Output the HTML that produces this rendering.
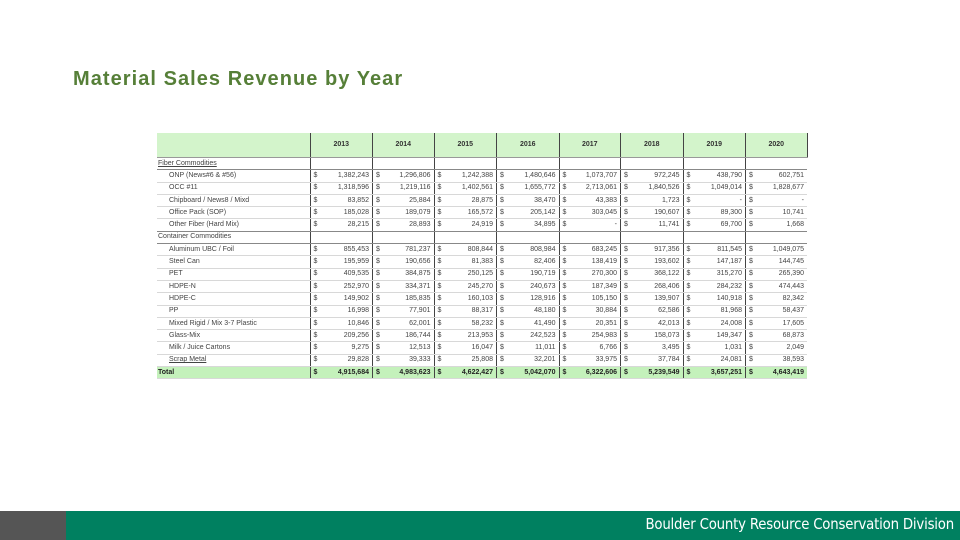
<!DOCTYPE html>
<html><head><meta charset="utf-8"><style>
html,body{margin:0;padding:0;background:#fff;width:960px;height:540px;overflow:hidden;position:relative;font-family:"Liberation Sans",Arial,sans-serif}
.title{position:absolute;left:73px;top:68px;font-size:20px;font-weight:bold;color:#567f38;letter-spacing:1.05px;white-space:nowrap}
.foot{position:absolute;left:0;top:511px;width:960px;height:29px;background:#008060}
.foot .g{position:absolute;left:0;top:0;width:66px;height:29px;background:#555}
.foot .t{position:absolute;right:6px;top:5px;font-size:14.8px;color:#fff;font-family:"DejaVu Sans Condensed","Liberation Sans Narrow",sans-serif;letter-spacing:-0.2px;white-space:nowrap}
table{position:absolute;left:157px;top:133px;border-collapse:collapse;table-layout:fixed;font-size:7px;color:#444}
td{padding:0;height:11.3px;line-height:10px;border-bottom:1px solid #d8d8d8;white-space:nowrap;overflow:hidden}
tr.h td{height:24px;background:#d3f4cb;font-weight:bold;text-align:center;color:#333;border-bottom:1px solid #999}
td.l{padding-left:12px}
td.c{padding-left:1px}
td.d{border-left:1px solid #444;padding-left:3px;width:11px}
td.v{text-align:right;padding-right:3px}
tr.tot td{background:#c4f1bb;font-weight:bold;color:#222}
tr.sec td{border-bottom:1px solid #888}
td.yr{border-left:1px solid #444}
</style></head><body>
<div class="title">Material Sales Revenue by Year</div>
<table>
<colgroup><col style="width:153px"><col style="width:14px"><col style="width:48px"><col style="width:14px"><col style="width:47px"><col style="width:14px"><col style="width:48px"><col style="width:14px"><col style="width:48px"><col style="width:14px"><col style="width:47px"><col style="width:14px"><col style="width:48px"><col style="width:14px"><col style="width:48px"><col style="width:14px"><col style="width:47px"></colgroup>
<tr class="h"><td></td><td class="yr" colspan="2">2013</td><td class="yr" colspan="2">2014</td><td class="yr" colspan="2">2015</td><td class="yr" colspan="2">2016</td><td class="yr" colspan="2">2017</td><td class="yr" colspan="2">2018</td><td class="yr" colspan="2">2019</td><td class="yr" colspan="2" style="border-right:1px solid #444">2020</td></tr>
<tr class="sec"><td class="c"><u>Fiber Commodities</u></td><td class="d"></td><td></td><td class="d"></td><td></td><td class="d"></td><td></td><td class="d"></td><td></td><td class="d"></td><td></td><td class="d"></td><td></td><td class="d"></td><td></td><td class="d"></td><td></td></tr>
<tr><td class="l">ONP (News#6 &amp; #56)</td><td class="d">$</td><td class="v">1,382,243</td><td class="d">$</td><td class="v">1,296,806</td><td class="d">$</td><td class="v">1,242,388</td><td class="d">$</td><td class="v">1,480,646</td><td class="d">$</td><td class="v">1,073,707</td><td class="d">$</td><td class="v">972,245</td><td class="d">$</td><td class="v">438,790</td><td class="d">$</td><td class="v">602,751</td></tr>
<tr><td class="l">OCC #11</td><td class="d">$</td><td class="v">1,318,596</td><td class="d">$</td><td class="v">1,219,116</td><td class="d">$</td><td class="v">1,402,561</td><td class="d">$</td><td class="v">1,655,772</td><td class="d">$</td><td class="v">2,713,061</td><td class="d">$</td><td class="v">1,840,526</td><td class="d">$</td><td class="v">1,049,014</td><td class="d">$</td><td class="v">1,828,677</td></tr>
<tr><td class="l">Chipboard / News8 / Mixd</td><td class="d">$</td><td class="v">83,852</td><td class="d">$</td><td class="v">25,884</td><td class="d">$</td><td class="v">28,875</td><td class="d">$</td><td class="v">38,470</td><td class="d">$</td><td class="v">43,383</td><td class="d">$</td><td class="v">1,723</td><td class="d">$</td><td class="v">-</td><td class="d">$</td><td class="v">-</td></tr>
<tr><td class="l">Office Pack (SOP)</td><td class="d">$</td><td class="v">185,028</td><td class="d">$</td><td class="v">189,079</td><td class="d">$</td><td class="v">165,572</td><td class="d">$</td><td class="v">205,142</td><td class="d">$</td><td class="v">303,045</td><td class="d">$</td><td class="v">190,607</td><td class="d">$</td><td class="v">89,300</td><td class="d">$</td><td class="v">10,741</td></tr>
<tr class="sec"><td class="l">Other Fiber (Hard Mix)</td><td class="d">$</td><td class="v">28,215</td><td class="d">$</td><td class="v">28,893</td><td class="d">$</td><td class="v">24,919</td><td class="d">$</td><td class="v">34,895</td><td class="d">$</td><td class="v">-</td><td class="d">$</td><td class="v">11,741</td><td class="d">$</td><td class="v">69,700</td><td class="d">$</td><td class="v">1,668</td></tr>
<tr class="sec"><td class="c">Container Commodities</td><td class="d"></td><td></td><td class="d"></td><td></td><td class="d"></td><td></td><td class="d"></td><td></td><td class="d"></td><td></td><td class="d"></td><td></td><td class="d"></td><td></td><td class="d"></td><td></td></tr>
<tr><td class="l">Aluminum UBC / Foil</td><td class="d">$</td><td class="v">855,453</td><td class="d">$</td><td class="v">781,237</td><td class="d">$</td><td class="v">808,844</td><td class="d">$</td><td class="v">808,984</td><td class="d">$</td><td class="v">683,245</td><td class="d">$</td><td class="v">917,356</td><td class="d">$</td><td class="v">811,545</td><td class="d">$</td><td class="v">1,049,075</td></tr>
<tr><td class="l">Steel Can</td><td class="d">$</td><td class="v">195,959</td><td class="d">$</td><td class="v">190,656</td><td class="d">$</td><td class="v">81,383</td><td class="d">$</td><td class="v">82,406</td><td class="d">$</td><td class="v">138,419</td><td class="d">$</td><td class="v">193,602</td><td class="d">$</td><td class="v">147,187</td><td class="d">$</td><td class="v">144,745</td></tr>
<tr><td class="l">PET</td><td class="d">$</td><td class="v">409,535</td><td class="d">$</td><td class="v">384,875</td><td class="d">$</td><td class="v">250,125</td><td class="d">$</td><td class="v">190,719</td><td class="d">$</td><td class="v">270,300</td><td class="d">$</td><td class="v">368,122</td><td class="d">$</td><td class="v">315,270</td><td class="d">$</td><td class="v">265,390</td></tr>
<tr><td class="l">HDPE-N</td><td class="d">$</td><td class="v">252,970</td><td class="d">$</td><td class="v">334,371</td><td class="d">$</td><td class="v">245,270</td><td class="d">$</td><td class="v">240,673</td><td class="d">$</td><td class="v">187,349</td><td class="d">$</td><td class="v">268,406</td><td class="d">$</td><td class="v">284,232</td><td class="d">$</td><td class="v">474,443</td></tr>
<tr><td class="l">HDPE-C</td><td class="d">$</td><td class="v">149,902</td><td class="d">$</td><td class="v">185,835</td><td class="d">$</td><td class="v">160,103</td><td class="d">$</td><td class="v">128,916</td><td class="d">$</td><td class="v">105,150</td><td class="d">$</td><td class="v">139,907</td><td class="d">$</td><td class="v">140,918</td><td class="d">$</td><td class="v">82,342</td></tr>
<tr><td class="l">PP</td><td class="d">$</td><td class="v">16,998</td><td class="d">$</td><td class="v">77,901</td><td class="d">$</td><td class="v">88,317</td><td class="d">$</td><td class="v">48,180</td><td class="d">$</td><td class="v">30,884</td><td class="d">$</td><td class="v">62,586</td><td class="d">$</td><td class="v">81,968</td><td class="d">$</td><td class="v">58,437</td></tr>
<tr><td class="l">Mixed Rigid / Mix 3-7 Plastic</td><td class="d">$</td><td class="v">10,846</td><td class="d">$</td><td class="v">62,001</td><td class="d">$</td><td class="v">58,232</td><td class="d">$</td><td class="v">41,490</td><td class="d">$</td><td class="v">20,351</td><td class="d">$</td><td class="v">42,013</td><td class="d">$</td><td class="v">24,008</td><td class="d">$</td><td class="v">17,605</td></tr>
<tr><td class="l">Glass-Mix</td><td class="d">$</td><td class="v">209,256</td><td class="d">$</td><td class="v">186,744</td><td class="d">$</td><td class="v">213,953</td><td class="d">$</td><td class="v">242,523</td><td class="d">$</td><td class="v">254,983</td><td class="d">$</td><td class="v">158,073</td><td class="d">$</td><td class="v">149,347</td><td class="d">$</td><td class="v">68,873</td></tr>
<tr><td class="l">Milk / Juice Cartons</td><td class="d">$</td><td class="v">9,275</td><td class="d">$</td><td class="v">12,513</td><td class="d">$</td><td class="v">16,047</td><td class="d">$</td><td class="v">11,011</td><td class="d">$</td><td class="v">6,766</td><td class="d">$</td><td class="v">3,495</td><td class="d">$</td><td class="v">1,031</td><td class="d">$</td><td class="v">2,049</td></tr>
<tr><td class="l"><u>Scrap Metal</u></td><td class="d">$</td><td class="v">29,828</td><td class="d">$</td><td class="v">39,333</td><td class="d">$</td><td class="v">25,808</td><td class="d">$</td><td class="v">32,201</td><td class="d">$</td><td class="v">33,975</td><td class="d">$</td><td class="v">37,784</td><td class="d">$</td><td class="v">24,081</td><td class="d">$</td><td class="v">38,593</td></tr>
<tr class="tot"><td class="c">Total</td><td class="d">$</td><td class="v">4,915,684</td><td class="d">$</td><td class="v">4,983,623</td><td class="d">$</td><td class="v">4,622,427</td><td class="d">$</td><td class="v">5,042,070</td><td class="d">$</td><td class="v">6,322,606</td><td class="d">$</td><td class="v">5,239,549</td><td class="d">$</td><td class="v">3,657,251</td><td class="d">$</td><td class="v">4,643,419</td></tr>
</table>
<div class="foot"><div class="g"></div><div class="t">Boulder County Resource Conservation Division</div></div>
</body></html>
